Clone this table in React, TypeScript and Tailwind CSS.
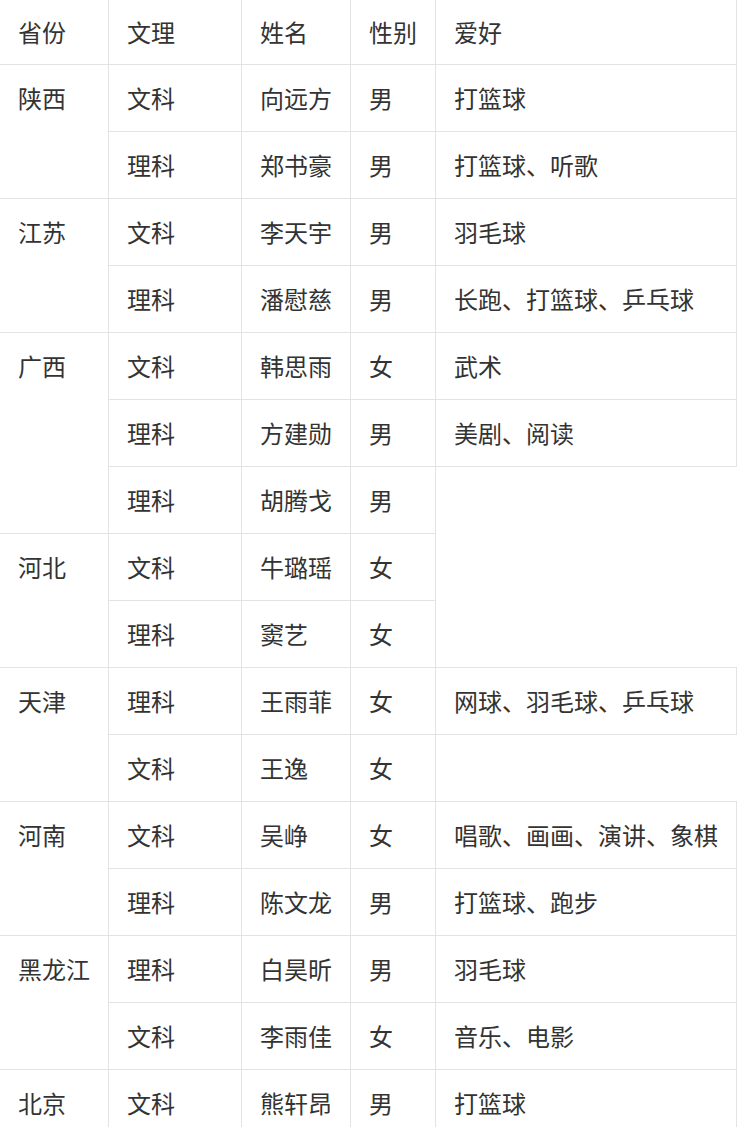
import React from 'react';

type Row = {
  province?: string;
  span?: number;
  track: string;
  name: string;
  gender: string;
  hobby?: string | null;
};

// hobby: undefined -> no cell at all (blank area in the picture)
const rows: Row[] = [
  { province: '陕西', span: 2, track: '文科', name: '向远方', gender: '男', hobby: '打篮球' },
  { track: '理科', name: '郑书豪', gender: '男', hobby: '打篮球、听歌' },
  { province: '江苏', span: 2, track: '文科', name: '李天宇', gender: '男', hobby: '羽毛球' },
  { track: '理科', name: '潘慰慈', gender: '男', hobby: '长跑、打篮球、乒乓球' },
  { province: '广西', span: 3, track: '文科', name: '韩思雨', gender: '女', hobby: '武术' },
  { track: '理科', name: '方建勋', gender: '男', hobby: '美剧、阅读' },
  { track: '理科', name: '胡腾戈', gender: '男' },
  { province: '河北', span: 2, track: '文科', name: '牛璐瑶', gender: '女' },
  { track: '理科', name: '窦艺', gender: '女' },
  { province: '天津', span: 2, track: '理科', name: '王雨菲', gender: '女', hobby: '网球、羽毛球、乒乓球' },
  { track: '文科', name: '王逸', gender: '女' },
  { province: '河南', span: 2, track: '文科', name: '吴峥', gender: '女', hobby: '唱歌、画画、演讲、象棋' },
  { track: '理科', name: '陈文龙', gender: '男', hobby: '打篮球、跑步' },
  { province: '黑龙江', span: 2, track: '理科', name: '白昊昕', gender: '男', hobby: '羽毛球' },
  { track: '文科', name: '李雨佳', gender: '女', hobby: '音乐、电影' },
  { province: '北京', span: 1, track: '文科', name: '熊轩昂', gender: '男', hobby: '打篮球' },
];

const cell = 'border border-[#e3e3e3] pl-[18px] pr-2 py-[15px] leading-[36px] align-top text-left font-normal';
const head = 'border border-[#e3e3e3] pl-[18px] pr-2 py-[14px] leading-[36px] align-top text-left font-normal';

export default function App() {
  return (
    <div
      className="w-[744px] h-[1127px] overflow-hidden bg-white text-[#333] text-[24px]"
      style={{ fontFamily: '"Microsoft YaHei", "Noto Sans CJK SC", "Noto Sans", sans-serif' }}
    >
      <table className="border-collapse table-fixed w-[737px] -mt-px -ml-px">
        <colgroup>
          <col className="w-[109px]" />
          <col className="w-[133px]" />
          <col className="w-[109px]" />
          <col className="w-[85px]" />
          <col className="w-[301px]" />
        </colgroup>
        <thead>
          <tr>
            <th className={head}>省份</th>
            <th className={head}>文理</th>
            <th className={head}>姓名</th>
            <th className={head}>性别</th>
            <th className={head}>爱好</th>
          </tr>
        </thead>
        <tbody>
          {rows.map((r, i) => (
            <tr key={i}>
              {r.province && (
                <td rowSpan={r.span} className={cell}>
                  {r.province}
                </td>
              )}
              <td className={cell}>{r.track}</td>
              <td className={cell}>{r.name}</td>
              <td className={cell}>{r.gender}</td>
              {r.hobby && <td className={cell + ' whitespace-nowrap'}>{r.hobby}</td>}
            </tr>
          ))}
        </tbody>
      </table>
    </div>
  );
}
